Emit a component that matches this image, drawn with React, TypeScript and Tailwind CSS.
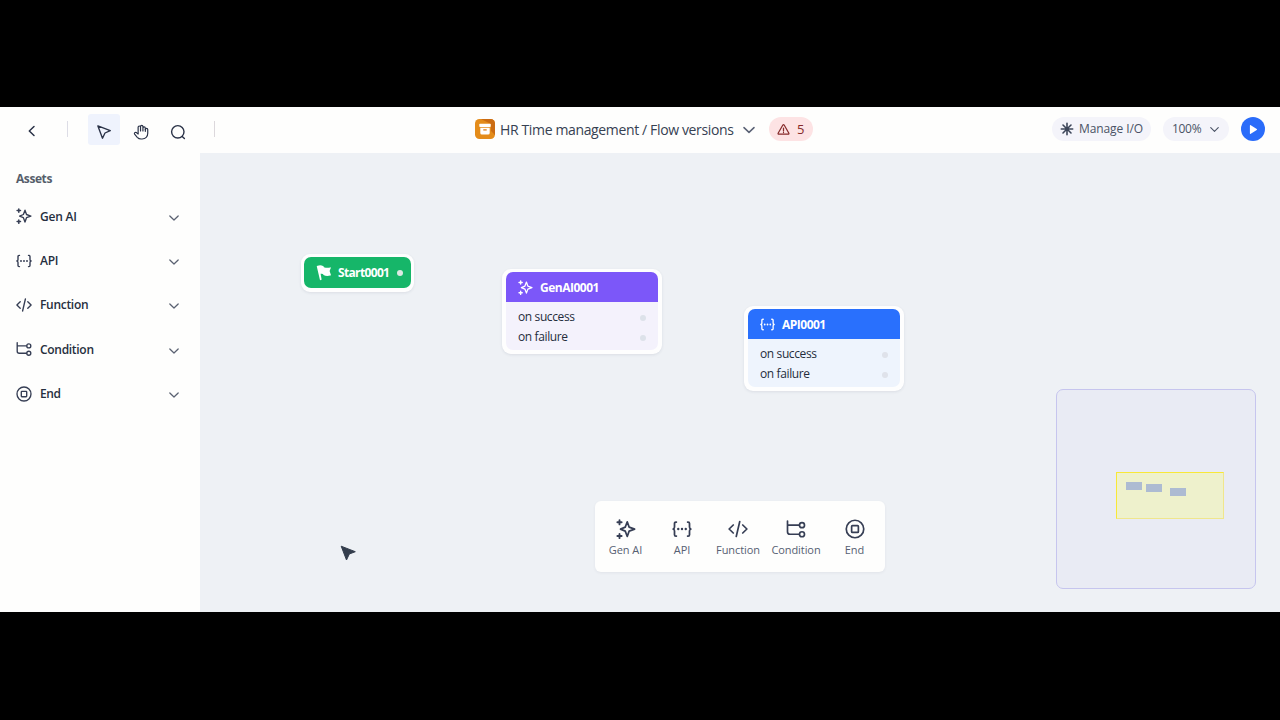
import React from "react";

type IconProps = { className?: string };

const stroke = {
  fill: "none",
  stroke: "currentColor",
  strokeLinecap: "round" as const,
  strokeLinejoin: "round" as const,
};

function GenAiIcon({ className }: IconProps) {
  return (
    <svg viewBox="0 0 16 16" className={className} {...stroke} strokeWidth={1.35}>
      <path d="M9 2.200 10.500 6.500 14.900 8.100 10.500 9.700 9 14 7.400 9.700 3.600 8.100 7.400 6.500Z" />
      <path d="M2.800 .9v3.400M1.100 2.600h3.400M2.800 11.900v3.400M1.100 13.600h3.400" strokeWidth={1.5} />
    </svg>
  );
}

function ApiIcon({ className }: IconProps) {
  return (
    <svg viewBox="0 0 16 16" className={className} {...stroke} strokeWidth={1.4}>
      <path d="M3.500 2.400h-.4q-1.100 0-1.100 1.100v2.900q0 1.300-1.100 1.600q1.100.3 1.100 1.600v2.900q0 1.100 1.100 1.100h.4" />
      <path d="M12.500 2.400h.4q1.100 0 1.100 1.100v2.900q0 1.300 1.100 1.600q-1.100.3-1.100 1.600v2.900q0 1.100-1.100 1.100h-.4" />
      <path d="M5 8h.01M8 8h.01M11 8h.01" strokeWidth={1.900} />
    </svg>
  );
}

function FunctionIcon({ className }: IconProps) {
  return (
    <svg viewBox="0 0 16 16" className={className} {...stroke} strokeWidth={1.35}>
      <path d="M4.200 4.800.9 8l3.300 3.200M11.800 4.800 15.100 8l-3.300 3.200M9.400 2 6.600 14" />
    </svg>
  );
}

function ConditionIcon({ className }: IconProps) {
  return (
    <svg viewBox="0 0 16 16" className={className} {...stroke} strokeWidth={1.35}>
      <path d="M1.200 1.600v8.600q0 2 2 2h7.300M1.200 4.900h9.300" />
      <circle cx="12.800" cy="4.900" r="2" />
      <circle cx="12.800" cy="12.200" r="2" />
    </svg>
  );
}

function EndIcon({ className }: IconProps) {
  return (
    <svg viewBox="0 0 16 16" className={className} {...stroke} strokeWidth={1.35}>
      <circle cx="8" cy="8" r="7" />
      <rect x="5.300" y="5.300" width="5.400" height="5.400" rx=".6" />
    </svg>
  );
}

function ChevronDown({ className }: IconProps) {
  return (
    <svg viewBox="0 0 12 12" className={className} {...stroke} strokeWidth={1.5}>
      <path d="M1 3.600 6 8.400l5-4.800" />
    </svg>
  );
}

const assets = [
  { label: "Gen AI", Icon: GenAiIcon, track: "tracking-[-0.22px]", cell: "w-[57px]" },
  { label: "API", Icon: ApiIcon, track: "tracking-[-0.3px]", cell: "w-[56px]" },
  { label: "Function", Icon: FunctionIcon, track: "tracking-[-0.3px]", cell: "w-[56px]" },
  { label: "Condition", Icon: ConditionIcon, track: "tracking-[-0.3px]", cell: "w-[60px]" },
  { label: "End", Icon: EndIcon, track: "tracking-[-0.4px]", cell: "w-[57px]" },
];

function Header() {
  return (
    <header className="flex h-[46px] shrink-0 items-center justify-between bg-[#fefefd] pb-[2px]">
      <div className="flex w-[460px] items-center text-[#2a3247]">
        <svg viewBox="0 0 16 16" className="mt-1 ml-[24px] h-4 w-4" {...stroke} strokeWidth={1.5}>
          <path d="M10 3.500 5.300 8l4.700 4.500" />
        </svg>
        <div className="ml-[27px] h-4 w-px bg-[#dddde6]" />
        <div className="ml-5 flex h-[31px] w-8 items-center justify-center rounded-[3px] bg-[#eff3fd]">
          <svg viewBox="0 0 16 16" className="mt-[5px] h-4 w-4" {...stroke} strokeWidth={1.35}>
            <path d="M1.900 1.900 14.300 6.600 9 9 6.500 14.200Z" />
          </svg>
        </div>
        <svg viewBox="0 0 24 24" className="mt-[5px] ml-[13px] h-4 w-4" {...stroke} strokeWidth={1.8}>
          <path d="M18.500 11V6.200a1.800 1.800 0 0 0-3.600 0V10.500M14.900 10.500V4a1.800 1.800 0 0 0-3.600 0V10.500M11.300 10.500V4.800a1.800 1.800 0 0 0-3.600 0V14" />
          <path d="M18.500 8.400a1.800 1.800 0 0 1 3.600 0V14c0 5-3.400 8.500-8.400 8.500h-1.600c-2.600 0-4.200-.9-5.700-2.500l-4-4.700a1.800 1.800 0 0 1 2.600-2.400L7.700 15" />
        </svg>
        <svg viewBox="0 0 16 16" className="mt-[5px] ml-[21px] h-4 w-4" {...stroke} strokeWidth={1.4}>
          <circle cx="7.800" cy="7.800" r="6.200" />
          <path d="m12.200 12.400 2.200 2.100" />
        </svg>
        <div className="ml-7 h-4 w-px bg-[#dcd8dc]" />
      </div>

      <div className="flex w-[370px] items-center pl-[15px]">
        <svg viewBox="0 0 20 20" className="h-5 w-5 shrink-0">
          <rect width="20" height="20" rx="4.500" fill="#e48c1a" />
          <path d="M6 0h9.500A4.500 4.500 0 0 1 20 4.500V16L16 12V5Z" fill="#cb6c13" />
          <rect x="4.300" y="4.700" width="11.400" height="3.200" rx=".7" fill="#fff" />
          <path d="M5.300 8.700h9.400v5.300a1.500 1.500 0 0 1-1.500 1.500H6.800a1.500 1.500 0 0 1-1.500-1.500Z" fill="#fff" />
          <path d="M8.300 10.900h3.400" stroke="#dc7f18" strokeWidth="1.300" />
        </svg>
        <span className="mt-[2px] ml-[5px] w-[243px] shrink-0 text-[14px] leading-5 tracking-[-0.36px] whitespace-nowrap text-[#364152]">
          HR Time management / Flow versions
        </span>
        <ChevronDown className="mt-[2px] h-3 w-3 shrink-0 text-[#596174]" />
        <div className="ml-[14px] flex h-6 w-11 shrink-0 items-center rounded-full bg-[#fde3e4] pl-2 text-[#872b2b]">
          <svg viewBox="0 0 14 14" className="h-[13px] w-[13px]" {...stroke} strokeWidth={1.35}>
            <path d="M6.300 2.200 1.200 11.100q-.3 1 .7 1h10.200q1 0 .7-1L7.700 2.200q-.7-.9-1.400 0ZM7 5.400v3.100M7 10.200v.1" />
          </svg>
          <span className="ml-[7px] text-[13px] leading-5">5</span>
        </div>
      </div>

      <div className="flex w-[450px] items-center justify-end pr-[15px] text-[#4a5365]">
        <div className="flex h-6 w-[99px] items-center rounded-full bg-[#f4f4fa] pl-2">
          <svg viewBox="0 0 14 14" className="h-[14px] w-[14px] text-[#3d4659]" {...stroke} strokeWidth={1.600}>
            <path d="M7 1.300v11.400M1.300 7h11.400M3 3l8 8M11 3l-8 8" />
          </svg>
          <span className="ml-[5px] text-[12px] leading-4 tracking-[-0.1px] whitespace-nowrap">Manage I/O</span>
        </div>
        <div className="ml-3 flex h-6 w-[66px] items-center rounded-full bg-[#f4f4fa] pl-[9px]">
          <span className="w-[36px] text-[12px] leading-4 tracking-[-0.3px]">100%</span>
          <ChevronDown className="ml-[2px] h-[9px] w-[9px]" />
        </div>
        <div className="ml-3 flex h-6 w-6 items-center justify-center rounded-full bg-[#2a6cfa]">
          <svg viewBox="0 0 10 12" className="h-[11px] w-[9px]">
            <path d="M1 1.800v8.400q0 1.200 1 .6l6.600-4.200q.8-.6 0-1.200L2 1.200q-1-.6-1 .6Z" fill="#fff" />
          </svg>
        </div>
      </div>
    </header>
  );
}

function Sidebar() {
  return (
    <aside className="w-[200px] shrink-0 bg-[#fefefd] px-4 pt-[17px]">
      <h2 className="h-[24px] text-[12px] leading-[18px] font-bold tracking-[-0.42px] text-[#565e6b]">Assets</h2>
      <ul>
        {assets.map(({ label, Icon, track }) => (
          <li key={label} className="flex h-[44.4px] items-center">
            <Icon className="h-4 w-4 text-[#363e54]" />
            <span className={`mt-px ml-2 flex-1 text-[12px] leading-4 font-semibold text-[#262f3e] ${track}`}>{label}</span>
            <ChevronDown className="mt-[3px] mr-[5px] h-[10px] w-[10px] text-[#5b6272]" />
          </li>
        ))}
      </ul>
    </aside>
  );
}

type FlowNodeProps = {
  title: string;
  place: string;
  head: string;
  body: string;
  dot: string;
  Icon: (p: IconProps) => React.JSX.Element;
};

function FlowNode({ title, place, head, body, dot, Icon }: FlowNodeProps) {
  return (
    <div className={`absolute h-[85px] w-[160px] rounded-[9px] bg-[#fefefe] px-1 pt-[3px] pb-1 shadow-[0_1px_3px_rgba(50,60,90,0.1)] ${place}`}>
      <div className={`h-full overflow-hidden rounded-[7px] ${body}`}>
        <div className={`flex h-[30px] items-center pl-3 text-white ${head}`}>
          <Icon className="h-[15px] w-[15px]" />
          <span className="mt-px ml-[7px] text-[12px] leading-4 font-bold tracking-[-0.5px]">{title}</span>
        </div>
        <div className="flex flex-col pt-[5px] pr-3 pl-3 text-[12px] leading-5 tracking-[-0.4px] text-[#252d3c]">
          {["on success", "on failure"].map((t) => (
            <div key={t} className="flex h-5 items-center justify-between">
              <span className="tracking-[-0.38px]">{t}</span>
              <span className={`mt-[2px] h-[6px] w-[6px] rounded-full ${dot}`} />
            </div>
          ))}
        </div>
      </div>
    </div>
  );
}

function Minimap() {
  return (
    <div className="absolute top-[236px] left-[856px] h-[200px] w-[200px] rounded-[7px] border border-[#c6c5ee] bg-[#e9ebf4]">
      <div className="absolute top-[82px] left-[59px] h-[47px] w-[108px] border border-[#f8e838] border-r-[#f0e68c] border-b-[#f0e68c] bg-[#eef1cc]">
        <div className="absolute top-[9px] left-[9px] h-2 w-4 bg-[#adbbd2]" />
        <div className="absolute top-[11px] left-[29px] h-2 w-4 bg-[#adbbd2]" />
        <div className="absolute top-[15px] left-[53px] h-2 w-4 bg-[#adbbd2]" />
      </div>
    </div>
  );
}

function Palette() {
  return (
    <div className="absolute top-[348px] left-[395px] flex h-[71px] w-[290px] rounded-[6px] bg-[#fefefd] pt-[18px] pl-[2px] shadow-[0_1px_3px_rgba(50,60,90,0.07)]">
      {assets.map(({ label, Icon, cell }) => (
        <div key={label} className={`flex flex-col items-center ${cell}`}>
          <Icon className="h-5 w-5 text-[#363e54]" />
          <span className="mt-[3px] text-[11px] leading-4 tracking-[-0.08px] whitespace-nowrap text-[#566072]">{label}</span>
        </div>
      ))}
    </div>
  );
}

function Canvas() {
  return (
    <main className="relative flex-1 overflow-hidden bg-[#eef1f5]">
      <div className="absolute top-[101px] left-[101px] h-[38px] w-[113px] rounded-[9px] bg-[#fefefe] p-[3px] shadow-[0_1px_3px_rgba(50,60,90,0.1)]">
        <div className="flex h-[31px] items-center rounded-[7px] bg-[#16b669] pl-3 text-white">
          <svg viewBox="0 0 16 16" className="h-4 w-4" fill="currentColor">
            <path d="M.8 1.500q-.1-.8.800-.8 3-.8 5.400.2.900.5.900 1.300 3.400 1.200 6.300.2 1-.2.600.7L13.600 6l1.200 3.600q.3.900-.6 1-4 .8-6.700-.6l-.5-1.100q-1.200-.3-2.400-.1l1 5.700q-.9 1.200-1.700.3Z" />
          </svg>
          <span className="mt-px ml-[6px] w-[59px] text-[12px] leading-4 font-bold tracking-[-0.65px]">Start0001</span>
          <span className="h-[6px] w-[6px] rounded-full bg-[#dbe9e3]" />
        </div>
      </div>
      <FlowNode title="GenAI0001" place="top-[116px] left-[302px]" head="bg-[#7c57f9]" body="bg-[#f4f2fc]" dot="bg-[#dde2ea]" Icon={GenAiIcon} />
      <FlowNode title="API0001" place="top-[153px] left-[544px]" head="bg-[#2970fd]" body="bg-[#eef4fd]" dot="bg-[#dfe2ea]" Icon={ApiIcon} />
      <Palette />
      <Minimap />
      <svg viewBox="0 0 18 18" className="absolute top-[391px] left-[139px] h-[18px] w-[18px]">
        <path d="M2.200 2.200 16.300 7.700 10.300 10 7.500 16Z" fill="#333d4c" stroke="#333d4c" strokeWidth="1" strokeLinejoin="round" />
      </svg>
    </main>
  );
}

export default function App() {
  return (
    <div className="h-[720px] w-[1280px] overflow-hidden bg-black py-[107px] font-['Open_Sans','Noto_Sans',sans-serif]">
      <div className="flex h-[505px] flex-col">
        <Header />
        <div className="flex min-h-0 flex-1">
          <Sidebar />
          <Canvas />
        </div>
      </div>
    </div>
  );
}
